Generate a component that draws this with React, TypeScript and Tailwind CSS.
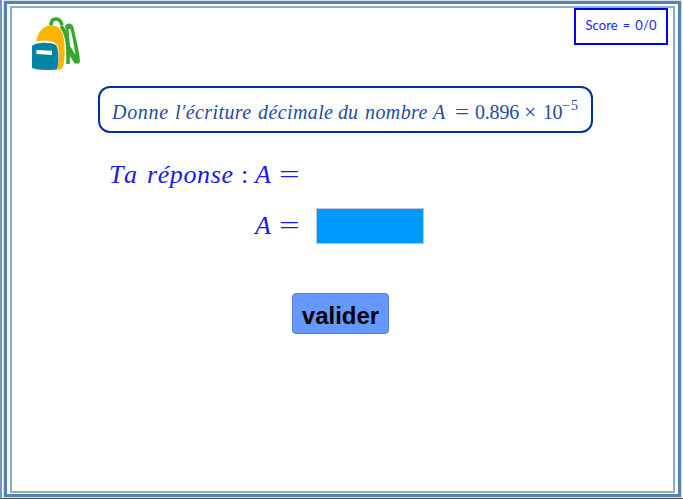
import React from "react";

function Backpack() {
  return (
    <svg viewBox="0 0 60 62" className="ml-[13px] mt-[4px] h-[62px] w-[60px] shrink-0" aria-label="Cartable">
      <path d="M26 13.500 V12 C27 5.500 35 5 37 13" fill="none" stroke="#35a82b" strokeWidth="3.6" />
      <path d="M36 14 C42 21 43.500 32 43 52" fill="none" stroke="#35a82b" strokeWidth="3.600" />
      <path fillRule="evenodd" fill="#35a82b" d="M40 14 C43 10 47 11 48.500 15 C50 24 54 36 55 49 L54 51.500 L49.500 51.500 L43 41 L43 27 Z M43.500 17 L45 34 L50.500 43 C49 32 47 23 45.500 17 Z" />
      <path fill="#ffb400" d="M11 29 C14 18 19 13.500 26 13.500 C36 13 40 23 39.500 36 C40 53 38 58 32.500 58 C34 48 34.500 40 32.500 34 C30 29 24 28 11 29 Z" />
      <path fill="#0083a5" d="M7 34 C11 30 26 30 31 33 C34 37 34 51 32 57.500 C25 58.500 11 58 7 56 Z" />
      <path fill="#fff" d="M11.500 38 L27 38.700 V43 L11.500 42 Z" />
    </svg>
  );
}

function Word({ children, className }: { children: React.ReactNode; className: string }) {
  return <span className={`block shrink-0 whitespace-nowrap ${className}`}>{children}</span>;
}

export default function App() {
  return (
    <div className="h-[499px] w-[683px] overflow-hidden border-b border-l-2 border-b-[#4a4a4e] border-l-[#7299bb] bg-white pl-[2px] pr-[2px] pt-px">
      <main className="h-[496px] border-[3px] border-[#5583ac] bg-white px-[3px] pb-px pt-[2px] shadow-[0_0_0_1px_#d3e0ea]">
        <div className="flex h-full flex-col border-2 border-[#8dadc7]">
          <header className="flex h-[78px] shrink-0 justify-between">
            <Backpack />
            <div className="mr-[5px] flex h-[37px] w-[94px] items-center justify-center border-2 border-[#0000ff] pb-px font-['Lato',sans-serif] text-[13px] tracking-[0.1px] text-[#2222e8] [word-spacing:1.5px]">
              Score = 0/0
            </div>
          </header>

          <section className="ml-[86px] flex h-[47px] w-[495px] shrink-0 items-center rounded-[12px] border-2 border-[#003399] pl-[12px] pt-[4px] font-['Liberation_Serif',serif] text-[20px] leading-[24px] text-[#1f4ca5]">
            <Word className="w-[63px] italic tracking-[0.7px]">Donne</Word>
            <Word className="w-[83px] italic tracking-[0.4px]">l′écriture</Word>
            <Word className="w-[80px] italic tracking-[0.4px]">décimale</Word>
            <Word className="w-[27px] italic">du</Word>
            <Word className="w-[68px] italic tracking-[0.4px]">nombre</Word>
            <Word className="w-[22px] italic">A</Word>
            <Word className="w-[20px] origin-left scale-x-[1.25]">=</Word>
            <Word className="w-[49px] tracking-[-0.2px]">0.896</Word>
            <Word className="w-[19px] text-[22px]">×</Word>
            <Word className="w-[19px] tracking-[-0.5px]">10</Word>
            <Word className="w-[18px] -translate-y-[6px] text-[14px] tracking-[1px]">−5</Word>
          </section>

          <section className="ml-[97px] mt-[24px] flex h-[36px] shrink-0 items-center font-['Liberation_Serif',serif] text-[26px] leading-[36px] text-[#1919ee]">
            <Word className="w-[38px] italic tracking-[3px]">Ta</Word>
            <Word className="w-[94px] italic tracking-[0.6px]">réponse</Word>
            <Word className="w-[14px]">:</Word>
            <Word className="w-[24px] italic">A</Word>
            <Word className="w-[20px] origin-left scale-x-[1.4]">=</Word>
          </section>

          <section className="ml-[243px] mt-[15px] flex h-[36px] shrink-0 items-center font-['Liberation_Serif',serif] text-[26px] leading-[38px] text-[#1919ee]">
            <Word className="w-[24px] italic">A</Word>
            <Word className="w-[37px] origin-left scale-x-[1.4]">=</Word>
            <input aria-label="Réponse" className="h-[36px] w-[108px] border border-[#b8c8d4] bg-[#0099ff] px-2 outline-none" />
          </section>

          <button className="ml-[280px] mt-[49px] h-[41px] w-[97px] shrink-0 rounded-[4px] border border-[#5580cc] bg-[#6699ff] pt-[5px] font-['Liberation_Sans',sans-serif] text-[24px] font-bold leading-[34px] text-black">
            valider
          </button>
        </div>
      </main>
    </div>
  );
}
